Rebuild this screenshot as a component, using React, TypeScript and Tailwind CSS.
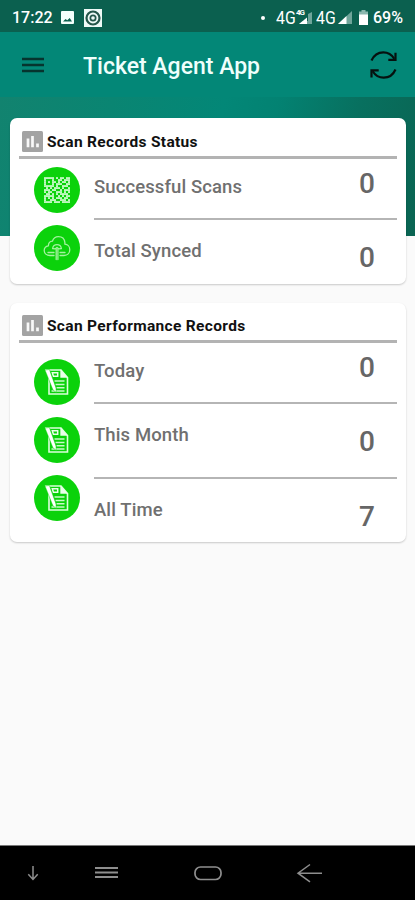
import type { ReactNode } from "react";
import clsx from "clsx";

const qrRows = [
  "1111101011011",
  "1000100110111",
  "1010110101101",
  "1000101110011",
  "1111101001110",
  "0101011101001",
  "1110110010111",
  "1011001110101",
  "0110101011110",
  "1111100101011",
  "1010101110110",
  "1001110011101",
  "1111011101111",
];

const QrIcon = () => (
  <svg width="26" height="26" viewBox="0 0 13 13" fill="#e6ffe6">
    {qrRows.map((row, y) =>
      row
        .split("")
        .map((cell, x) =>
          cell === "1" ? (
            <rect
              key={`${x}-${y}`}
              x={x}
              y={y}
              width="1"
              height="1"
              rx="0.2"
              opacity="0.9"
            />
          ) : null,
        ),
    )}
  </svg>
);

const CloudIcon = () => (
  <svg
    width="28"
    height="26"
    viewBox="0 0 28 26"
    fill="none"
    stroke="#a5f2a0"
    strokeWidth="1.3"
    strokeLinecap="round"
    strokeLinejoin="round"
  >
    <path d="M11 20.5H7C3.6 20.5 1.2 18.4 1.2 15.6c0-2.5 1.7-4.4 4.2-4.8C5.5 8 7 6.3 9.4 6.2 10.5 3.2 12.7 1.7 15.4 1.7c3.5 0 6.1 2.4 6.5 5.9 0 .6 0 1.1-.1 1.6 2.9.2 5 2.5 5 5.5 0 3.4-2.4 5.8-5.8 5.8H17" />
    <path d="M11 17.5H5M17 17.5h5M9.6 13.5c.4-2.4 2.1-3.8 4.400-3.800s4 1.400 4.400 3.800l-2.400.4-2-1.500-2 1.500z" />
    <path d="M13.200 14v10.500M14.900 14v10.500" />
  </svg>
);

const ReportIcon = () => (
  <svg width="26" height="28" viewBox="0 0 26 28" fill="none">
    <path d="M2 2h15l6.5 7.500V26H5V9z" stroke="#dcffdc" strokeWidth="1.6" />
    <path d="M16.3 1.500v8.300h7.700z" fill="#eaffea" />
    <path d="M8.300 4.700h5.400v3.500H9.400z" stroke="#eaffea" strokeWidth="1.5" />
    <path
      d="M10.500 13h10M11.500 16.400h9M12.500 19.800h8M7.500 23h13"
      stroke="#c8fac8"
      strokeWidth="1.5"
    />
    <path
      d="M1 2l4.400-.5 6.600 18.500.2 4.500-3.400-3z"
      fill="#fff"
      stroke="#0bd20b"
      strokeWidth="0.5"
    />
  </svg>
);

const ChartIcon = () => (
  <svg width="21" height="21" viewBox="0 0 21 21" className="shrink-0">
    <rect width="21" height="21" rx="1.5" fill="#a3a3a3" />
    <path
      d="M6 7.500v8.700M10.500 5v11.200M15.500 12.500v3.700"
      stroke="#f8f8f8"
      strokeWidth="2.7"
    />
  </svg>
);

const StatusBar = () => (
  <div className="flex h-8 items-center bg-[#0b604f] pt-[3px] pr-[11px] pl-3 text-white">
    <span className="w-[42px] text-[16px] font-medium">17:22</span>
    <svg width="13" height="13" viewBox="0 0 13 13" className="ml-[7px]">
      <rect width="13" height="13" rx="1" fill="#f4fffc" />
      <path d="M2 10.500l2.500-2.500 1.800 1.200L8.700 7l2.300 3.500z" fill="#0b604f" />
    </svg>
    <svg width="18" height="18" viewBox="0 0 18 18" className="ml-[10px]">
      <rect width="18" height="18" fill="#eefaf7" />
      <circle
        cx="9"
        cy="9"
        r="6.5"
        fill="none"
        stroke="#24564a"
        strokeWidth="2.2"
      />
      <circle cx="9" cy="9" r="3.5" fill="#24564a" />
      <circle cx="9" cy="9" r="1.8" fill="#eefaf7" />
    </svg>
    <span className="ml-auto size-1 rounded-full bg-white" />
    <div className="relative ml-[11px] flex w-[36px] items-center">
      <span className="inline-block origin-left scale-x-[0.88] text-[18px]">
        4G
      </span>
      <span className="absolute top-[5px] left-[20px] text-[8px] leading-none font-bold tracking-[-1px]">
        4G
      </span>
      <svg
        width="13"
        height="13"
        viewBox="0 0 13 13"
        className="absolute top-[7px] left-[23px]"
      >
        <path d="M13 1v12H0l4-3h5V3z" fill="#6fa59a" />
        <path d="M8 6.500V13H0z" fill="#fff" />
      </svg>
    </div>
    <span className="ml-[4px] inline-block w-[21px] origin-left scale-x-[0.88] text-[18px]">
      4G
    </span>
    <svg width="14" height="13" viewBox="0 0 14 13" className="ml-[1px]">
      <path d="M14 0v13H0z" fill="#6fa59a" />
      <path d="M8.500 5v8H0z" fill="#fff" />
    </svg>
    <svg width="9" height="15" viewBox="0 0 9 15" className="ml-[7px]">
      <path d="M0 1.500h2.500V0h4v1.500H9V5H0z" fill="#8bb8af" />
      <path d="M0 4.500h9V15H0z" fill="#fff" />
    </svg>
    <span className="ml-[5px] w-[31px] text-[16px] font-medium">69%</span>
  </div>
);

const AppBar = () => (
  <header className="flex h-[65px] items-center bg-[#038777] pr-[18px] pl-[22px]">
    <svg
      width="22"
      height="16"
      viewBox="0 0 22 16"
      stroke="#06342e"
      strokeWidth="2.6"
    >
      <path d="M0 2h22M0 8h22M0 14h22" />
    </svg>
    <h1 className="ml-[39px] pt-[5px] text-[23px] font-medium whitespace-nowrap text-[#effffc]">
      Ticket Agent App
    </h1>
    <svg
      width="27"
      height="28"
      viewBox="0 0 27 28"
      className="ml-auto"
      fill="none"
      stroke="#06110f"
      strokeWidth="2.2"
    >
      <path d="M1.500 9.500C3.700 4.500 8 1.300 13.300 1.300c4.600 0 8.500 2.400 11 6.500" />
      <path d="M25.500 1.700v7.200h-7.200" />
      <path d="M25.500 18.500c-2.200 5-6.500 8.200-11.800 8.200-4.600 0-8.500-2.400-11-6.500" />
      <path d="M1.500 26.500v-7.200h7.200" />
    </svg>
  </header>
);

type CardProps = {
  title: string;
  icons: ReactNode[];
  iconsClassName: string;
  className: string;
  children: ReactNode;
};

const Card = ({
  title,
  icons,
  iconsClassName,
  className,
  children,
}: CardProps) => (
  <section
    className={clsx(
      "rounded-[7px] bg-white pr-[9px] pl-[9.5px] shadow-[0_1px_2px_rgba(0,0,0,0.2)]",
      className,
    )}
  >
    <div className="flex h-[28px] items-start gap-1 border-b-3 border-[#b3b3b3] pl-[3px]">
      <ChartIcon />
      <h2 className="text-[15.5px] leading-[22px] font-bold tracking-[0.33px] whitespace-nowrap text-[#111]">
        {title}
      </h2>
    </div>
    <div className="flex">
      <div
        className={clsx("flex w-[75px] flex-col gap-3 pl-[15px]", iconsClassName)}
      >
        {icons.map((icon, index) => (
          <div
            key={index}
            className="flex size-[46px] items-center justify-center rounded-full bg-[#0bd20b]"
          >
            {icon}
          </div>
        ))}
      </div>
      <div className="flex-1">{children}</div>
    </div>
  </section>
);

type RecordRowProps = {
  label: string;
  value: number;
  className?: string;
  labelClassName: string;
  valueClassName: string;
};

const RecordRow = ({
  label,
  value,
  className,
  labelClassName,
  valueClassName,
}: RecordRowProps) => (
  <div
    className={clsx(
      "flex items-start justify-between border-[#b5b5b5] pr-[22px] text-[#707070]",
      className,
    )}
  >
    <span
      className={clsx(
        "text-[18.5px] leading-6 font-medium tracking-[0.1px]",
        labelClassName,
      )}
    >
      {label}
    </span>
    <span
      className={clsx(
        "text-[28px] leading-8 font-medium text-[#666]",
        valueClassName,
      )}
    >
      {value}
    </span>
  </div>
);

const NavigationBar = () => (
  <nav className="h-[55px] border-t border-[#777] bg-black">
    <svg
      width="415"
      height="54"
      viewBox="0 0 415 54"
      fill="none"
      stroke="#8e8e8e"
      strokeWidth="1.5"
    >
      <path d="M33 20v13.500M28.300 28.300l4.700 5.200 4.700-5.200" />
      <path d="M95 22h23M95 26.500h23M95 31h23" strokeWidth="2" />
      <rect x="195" y="21" width="26" height="12.5" rx="5.5" strokeWidth="1.7" />
      <path d="M322 27.200h-24M310 18.500l-12 8.700 12 8.700" />
    </svg>
  </nav>
);

const App = () => {
  return (
    <div className="flex h-[900px] w-[415px] flex-col overflow-hidden bg-[#fafafa] font-[Roboto,sans-serif]">
      <StatusBar />
      <AppBar />
      <main className="flex-1 bg-[linear-gradient(105deg,#12836f_0%,#0a8572_25%,#038777_50%,#038272_62%,#08705f_80%,#0a6452_100%)] bg-[length:100%_139px] bg-no-repeat pt-[21px] pr-[9px] pl-[9.5px]">
        <Card
          title="Scan Records Status"
          icons={[<QrIcon />, <CloudIcon />]}
          iconsClassName="pt-2"
          className="h-[166px] pt-[13px]"
        >
          <RecordRow
            label="Successful Scans"
            value={0}
            className="h-[61px] border-b-2"
            labelClassName="pt-4"
            valueClassName="pt-[9px]"
          />
          <RecordRow
            label="Total Synced"
            value={0}
            labelClassName="pt-[19px]"
            valueClassName="pt-[22px]"
          />
        </Card>
        <Card
          title="Scan Performance Records"
          icons={[<ReportIcon />, <ReportIcon />, <ReportIcon />]}
          iconsClassName="pt-4"
          className="mt-[19px] h-[239px] pt-3"
        >
          <RecordRow
            label="Today"
            value={0}
            className="h-[61px] border-b-2"
            labelClassName="pt-4"
            valueClassName="pt-[9px]"
          />
          <RecordRow
            label="This Month"
            value={0}
            className="h-[75px] border-b-2"
            labelClassName="pt-[19px]"
            valueClassName="pt-[22px]"
          />
          <RecordRow
            label="All Time"
            value={7}
            labelClassName="pt-[19px]"
            valueClassName="pt-[22px]"
          />
        </Card>
      </main>
      <NavigationBar />
    </div>
  );
};

export default App;
